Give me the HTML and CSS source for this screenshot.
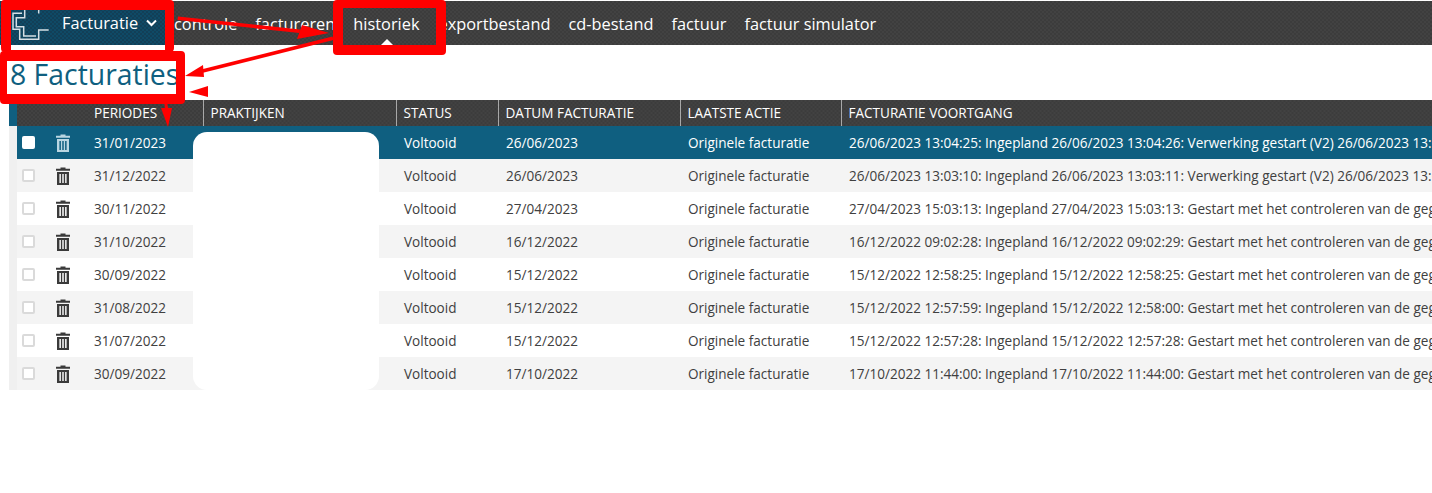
FILE: index.html
```html
<!DOCTYPE html>
<html lang="nl">
<head>
<meta charset="utf-8">
<title>Facturaties</title>
<link rel="stylesheet" href="styles.css">
</head>
<body>
<svg width="0" height="0" class="defs">
  <symbol id="trash" viewBox="0 0 14 18">
    <path d="M4.500 1.800V.6h5v1.200H14v2H0v-2z" fill="currentColor"/>
    <path d="M1 5h12v13H1zM3.400 7v9h1.500V7zM6.250 7v9h1.500V7zM9.100 7v9h1.500V7z" fill="currentColor" fill-rule="evenodd"/>
  </symbol>
</svg>
<nav class="topbar">
  <div class="brand">
    <svg class="logo" width="40" height="36" viewBox="0 0 40 36" fill="none" stroke="#d5dfe5" stroke-width="1.500">
      <path d="M12 8.300H3V24.300H9.700V34.300H28.700V25H38.700"/>
      <path d="M14.700 4V12.700H6.300V21.700H13.700V31H26"/>
      <path d="M28.700 4V8.500"/>
    </svg>
    <span class="brand-label">Facturatie</span>
    <svg class="chev" width="11" height="8" viewBox="0 0 11 8" fill="none" stroke="#fff" stroke-width="2"><path d="M1 1.500l4.500 4.500L10 1.500"/></svg>
  </div>
  <a class="nav-item">controle</a>
  <a class="nav-item">factureren</a>
  <a class="nav-item active">historiek</a>
  <a class="nav-item">exportbestand</a>
  <a class="nav-item">cd-bestand</a>
  <a class="nav-item">factuur</a>
  <a class="nav-item">factuur simulator</a>
</nav>
<h1 class="title">8 Facturaties</h1>
<div class="table-wrap">
<table class="grid">
  <colgroup>
    <col class="c-check"><col class="c-trash"><col class="c-period"><col class="c-prakt"><col class="c-status"><col class="c-date"><col class="c-action"><col class="c-progress">
  </colgroup>
  <thead>
    <tr><th></th><th></th><th>PERIODES</th><th class="sep">PRAKTIJKEN</th><th class="sep">STATUS</th><th class="sep">DATUM FACTURATIE</th><th class="sep">LAATSTE ACTIE</th><th class="sep">FACTURATIE VOORTGANG</th></tr>
  </thead>
  <tbody>
    <tr class="selected"><td><span class="box"></span></td><td><svg class="bin"><use href="#trash"/></svg></td><td>31/01/2023</td><td></td><td>Voltooid</td><td>26/06/2023</td><td>Originele facturatie</td><td>26/06/2023 13:04:25: Ingepland 26/06/2023 13:04:26: Verwerking gestart (V2) 26/06/2023 13:04:27: Gestart met het controleren</td></tr>
    <tr><td><span class="box"></span></td><td><svg class="bin"><use href="#trash"/></svg></td><td>31/12/2022</td><td></td><td>Voltooid</td><td>26/06/2023</td><td>Originele facturatie</td><td>26/06/2023 13:03:10: Ingepland 26/06/2023 13:03:11: Verwerking gestart (V2) 26/06/2023 13:03:12: Gestart met het controleren</td></tr>
    <tr><td><span class="box"></span></td><td><svg class="bin"><use href="#trash"/></svg></td><td>30/11/2022</td><td></td><td>Voltooid</td><td>27/04/2023</td><td>Originele facturatie</td><td>27/04/2023 15:03:13: Ingepland 27/04/2023 15:03:13: Gestart met het controleren van de gegevens</td></tr>
    <tr><td><span class="box"></span></td><td><svg class="bin"><use href="#trash"/></svg></td><td>31/10/2022</td><td></td><td>Voltooid</td><td>16/12/2022</td><td>Originele facturatie</td><td>16/12/2022 09:02:28: Ingepland 16/12/2022 09:02:29: Gestart met het controleren van de gegevens</td></tr>
    <tr><td><span class="box"></span></td><td><svg class="bin"><use href="#trash"/></svg></td><td>30/09/2022</td><td></td><td>Voltooid</td><td>15/12/2022</td><td>Originele facturatie</td><td>15/12/2022 12:58:25: Ingepland 15/12/2022 12:58:25: Gestart met het controleren van de gegevens</td></tr>
    <tr><td><span class="box"></span></td><td><svg class="bin"><use href="#trash"/></svg></td><td>31/08/2022</td><td></td><td>Voltooid</td><td>15/12/2022</td><td>Originele facturatie</td><td>15/12/2022 12:57:59: Ingepland 15/12/2022 12:58:00: Gestart met het controleren van de gegevens</td></tr>
    <tr><td><span class="box"></span></td><td><svg class="bin"><use href="#trash"/></svg></td><td>31/07/2022</td><td></td><td>Voltooid</td><td>15/12/2022</td><td>Originele facturatie</td><td>15/12/2022 12:57:28: Ingepland 15/12/2022 12:57:28: Gestart met het controleren van de gegevens</td></tr>
    <tr><td><span class="box"></span></td><td><svg class="bin"><use href="#trash"/></svg></td><td>30/09/2022</td><td></td><td>Voltooid</td><td>17/10/2022</td><td>Originele facturatie</td><td>17/10/2022 11:44:00: Ingepland 17/10/2022 11:44:00: Gestart met het controleren van de gegevens</td></tr>
  </tbody>
</table>
</div>
<div class="redaction"></div>
<svg class="annotations" width="1432" height="493" viewBox="0 0 1432 493" fill="#f00" fill-rule="evenodd">
  <path d="M4 0H170Q174 0 174 4V48Q174 52 170 52H4Q1 52 1 48V4Q1 0 4 0ZM11 10V50H165V10Z"/>
  <path d="M337 0H442Q446 0 446 4V51Q446 55 442 55H337Q333 55 333 51V4Q333 0 337 0ZM343 8V45H436V8Z"/>
  <path d="M4 51H181Q185 51 185 55V100Q185 104 181 104H4Q0 104 0 100V55Q0 51 4 51ZM7 61V94H176V61Z"/>
  <path d="M178 16.500L300 29.500L299.500 33L177.500 20Z"/>
  <path d="M329 33L297 39L302 25Z"/>
  <path d="M332.500 36.500L333.500 40L200 73.500L199 70Z"/>
  <path d="M185 76L203 65L204 77Z"/>
  <path d="M189 92L208 86V97Z"/>
  <path d="M163.500 100H166.500L168.500 110H165.500Z"/>
  <path d="M168 127L161 108H172Z"/>
</svg>
</body>
</html>
```
FILE: styles.css
```css
* { box-sizing: border-box; }
html, body { margin: 0; padding: 0; }
body {
  position: relative;
  width: 1432px;
  height: 493px;
  overflow: hidden;
  background: #fff;
  font-family: "Open Sans", "Liberation Sans", sans-serif;
  color: #404040;
}
.defs { position: absolute; }
.topbar {
  display: flex;
  align-items: stretch;
  height: 44px;
  margin-top: 1px;
  background: repeating-conic-gradient(#3c3c3c 0 25%, #424242 0 50%) 0 0 / 4px 4px;
  color: #fff;
  font-size: 16.350px;
}
.brand {
  display: flex;
  align-items: center;
  width: 165px;
  padding-left: 10px;
  background: repeating-conic-gradient(#0f4a66 0 25%, #123f57 0 50%) 0 0 / 4px 4px;
}
.logo { margin-right: 12px; flex: none; }
.brand-label { margin-right: 8px; }
.chev { flex: none; }
.nav-item {
  position: relative;
  display: flex;
  align-items: center;
  padding: 1px 9px 0;
  white-space: nowrap;
}
.nav-item.active { padding: 1px 10px 0 9px; }
.nav-item.active::after {
  content: "";
  position: absolute;
  left: 50%;
  bottom: 0;
  margin-left: -6px;
  border: 6px solid transparent;
  border-top: 0;
  border-bottom-color: #fff;
}
.title {
  margin: 0;
  height: 55px;
  padding: 5px 0 0 10px;
  font-size: 28.400px;
  line-height: 48px;
  font-weight: 400;
  color: #0f5f80;
  white-space: nowrap;
}
.table-wrap {
  margin-left: 9px;
  padding-left: 8px;
  width: 1423px;
  overflow: hidden;
  background: linear-gradient(#0f5f80 0 26px, #f0f0f0 26px);
}
.grid {
  border-collapse: collapse;
  table-layout: fixed;
  width: 1900px;
  font-size: 13.550px;
}
.c-check { width: 28px; }
.c-trash { width: 41px; }
.c-period { width: 117px; }
.c-prakt { width: 193px; }
.c-status { width: 102px; }
.c-date { width: 182px; }
.c-action { width: 161px; }
.grid th {
  height: 26px;
  padding: 0 8px;
  text-align: left;
  font-weight: 400;
  color: #fff;
  background: repeating-conic-gradient(#3c3c3c 0 25%, #424242 0 50%) 0 0 / 4px 4px;
  white-space: nowrap;
  overflow: hidden;
}
.grid th.sep { border-left: 1px solid #a8a8a8; padding-left: 7px; }
.grid td {
  height: 33px;
  padding: 0 8px;
  white-space: nowrap;
  overflow: hidden;
  background: #fff;
}
.grid tbody tr:nth-child(even) td { background: #f4f4f4; }
.grid tbody tr.selected td { background: #0f5f80; color: #fff; }
.grid td:first-child { padding: 0 0 0 5px; }
.grid td:nth-child(2) { padding: 0 0 0 11px; }
.box {
  display: block;
  width: 13px;
  height: 13px;
  background: #fff;
  border: 2px solid #dadada;
  border-radius: 2px;
}
.selected .box { border-color: #fff; }
.bin {
  display: block;
  width: 14px;
  height: 18px;
  color: #3a3a3a;
}
.selected .bin { color: #b9d6e2; }
.redaction {
  position: absolute;
  left: 193px;
  top: 132px;
  width: 186px;
  height: 258px;
  background: #fff;
  border-radius: 14px;
}
.annotations { position: absolute; left: 0; top: 0; }
```
